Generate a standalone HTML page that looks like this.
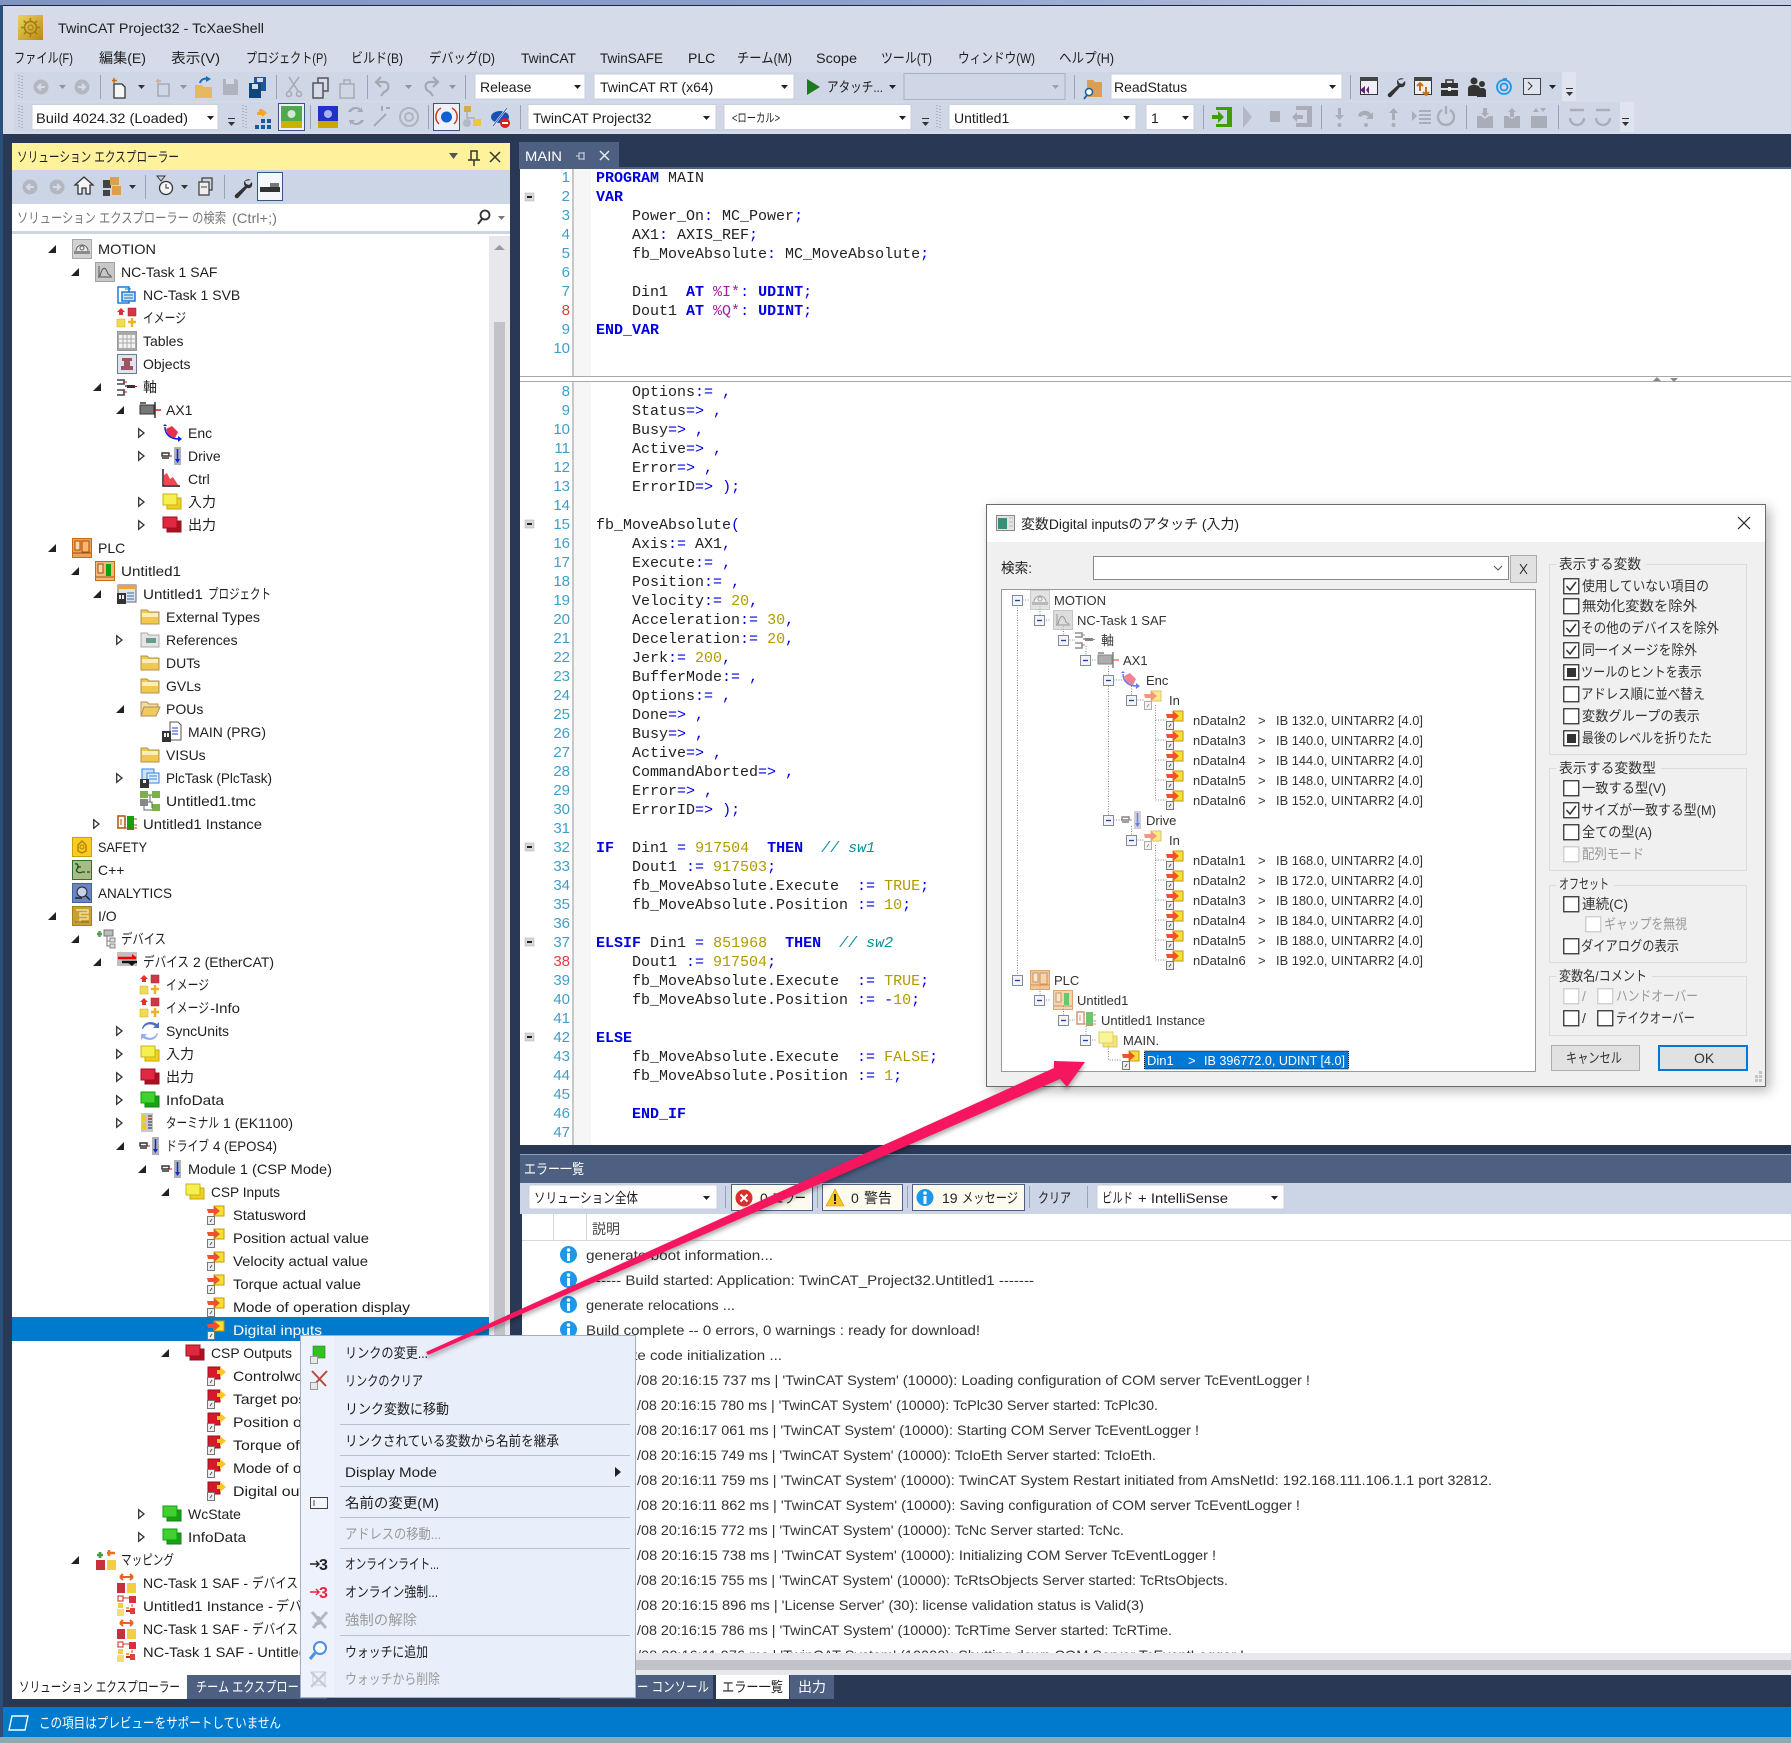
<!DOCTYPE html>
<html lang="ja"><head><meta charset="utf-8"><title>TwinCAT Project32 - TcXaeShell</title>
<style>
html,body{margin:0;padding:0;background:#fff}
svg{display:block;font-family:"Liberation Sans","Noto Sans CJK JP",sans-serif;font-size:14px;fill:#1e1e1e}
.code text{font-family:"Liberation Mono",monospace;font-size:15px;white-space:pre;fill:#222}
.ln text{font-family:"Liberation Sans",sans-serif;font-size:15px;fill:#3f9fc9;text-anchor:end}
.k{fill:#0000e0;font-weight:bold}.o{fill:#0000e0}.n{fill:#b09a00}.c{fill:#0a8f9a;font-style:italic}.p{fill:#a020a0}
.dt text{font-size:13px;fill:#333}
.dim{fill:#9a9a9a}
</style></head><body>
<svg width="1791" height="1743" viewBox="0 0 1791 1743" xmlns="http://www.w3.org/2000/svg">
<defs>
<path id="o" d="M8 0V8H0Z" fill="#222"/>
<path id="cl" d="M.7 .7L6 5L.7 9.3Z" fill="#fff" stroke="#333" stroke-width="1.3"/>
<path id="dd" d="M0 0h7L3.5 4z"/>
<g id="ov"><rect width="7" height="1" fill="#333"/><path d="M0 4h7L3.5 8z" fill="#333"/></g>
<g id="bk"><circle cx="8" cy="8" r="7.5" fill="#b3b7c0"/><path d="M12 8H5M8 5L5 8l3 3" stroke="#d6dbe9" stroke-width="2" fill="none"/></g>
<g id="fw"><circle cx="8" cy="8" r="7.5" fill="#b3b7c0"/><path d="M4 8h7M8 5l3 3-3 3" stroke="#d6dbe9" stroke-width="2" fill="none"/></g>
<g id="grip"><path d="M1 0v24M4 1v24" stroke="#8a93a8" stroke-dasharray="1 2" fill="none"/></g>
<g id="motion"><rect x=".5" y=".5" width="19" height="19" fill="#d2d2d2" stroke="#a8a8a8"/><path d="M4 12a6 6 0 0 1 12 0" fill="#e8e8e8" stroke="#666"/><rect x="2" y="12" width="16" height="3" fill="#8c8c8c"/><circle cx="10" cy="9" r="2" fill="none" stroke="#666"/></g>
<g id="nc"><rect x=".5" y=".5" width="19" height="19" fill="#c8c8c8" stroke="#a0a0a0"/><path d="M4 15V4M3 15h14M5 14c3-12 6-8 8-2l3 2" fill="none" stroke="#555"/></g>
<g id="task"><rect x="1" y="2" width="11" height="16" fill="#fff" stroke="#1070d0" stroke-width="1.4"/><rect x="5" y="7" width="13" height="9" fill="#cfe4f8" stroke="#1070d0" stroke-width="1.4"/><path d="M7 10h9M7 13h9M8 4h6" stroke="#1070d0"/></g>
<g id="img"><path d="M4 0l4 4H6v3H2V4H0z" fill="#e03030"/><rect x="11" y="0" width="8" height="8" fill="#d03848" stroke="#a02030" stroke-width=".5"/><rect x="0" y="11" width="8" height="8" fill="#f0dc50" stroke="#c8b020" stroke-width=".5"/><path d="M15 10v9M11 14h8" stroke="#f0b020" stroke-width="2.4"/></g>
<g id="tbl"><rect x=".5" y=".5" width="19" height="19" fill="#aaa" stroke="#999"/><path d="M2 4h16v13H2z" fill="#f4f4f4"/><path d="M2 8h16M2 12h16M6 4v13M10 4v13M14 4v13" stroke="#aaa"/></g>
<g id="obj"><rect x=".5" y=".5" width="19" height="19" fill="#dfe4ee" stroke="#6a7890"/><path d="M5 4h10v3h-2v5h3v4H4v-4h3V7H5z" fill="#a05560"/></g>
<g id="axes"><path d="M0 3h7v4h-7M0 13h7v5h-7M8 9h7" stroke="#444" stroke-width="1.6" fill="none"/><rect x="10" y="8" width="8" height="3" fill="#333"/><path d="M17 9.500h3M7 5h3M7 15h3" stroke="#d01010"/></g>
<g id="ax"><rect x="0" y="5" width="14" height="9" fill="#777" stroke="#333"/><path d="M0 3h6M15 2v16" stroke="#333" stroke-width="1.500"/><path d="M15 10h6" stroke="#e01010" stroke-width="1.500"/></g>
<g id="enc"><path d="M4 6l6-3 6 6-3 6-7-3z" fill="#e8304a"/><path d="M3 4c0 8 6 12 14 12" fill="none" stroke="#1020e0" stroke-width="1.500"/><path d="M16 13l4 3-4 3zM1 3l2-2 2 2" fill="#1020e0"/></g>
<g id="drv"><path d="M0 7h7v3H0zM0 12h7" stroke="#333" fill="none" stroke-width="1.4"/><path d="M7 10h3" stroke="#e01010"/><rect x="12" y="1" width="7" height="18" fill="#b0b0b8"/><path d="M15.500 3v12" stroke="#1020e0" stroke-width="1.500"/><path d="M13 13h5l-2.500 4z" fill="#1020e0"/></g>
<g id="ctl"><path d="M1 0V17H18" stroke="#111" stroke-width="1.400" fill="none"/><path d="M2 16V6l3-2 3 6 3-2 5 8z" fill="#f04850"/></g>
<g id="yel"><rect x="5" y="6" width="14" height="11" fill="#f0d020" stroke="#c8a800"/><rect x="1" y="2" width="14" height="11" fill="#f4f050" stroke="#d0b010"/></g>
<g id="red"><rect x="5" y="6" width="14" height="11" fill="#b01020" stroke="#901020"/><rect x="1" y="2" width="14" height="11" fill="#e02840" stroke="#a01020"/></g>
<g id="grn"><rect x="5" y="6" width="14" height="11" fill="#18a018" stroke="#108010"/><rect x="1" y="2" width="14" height="11" fill="#40d030" stroke="#10a010"/></g>
<g id="plc"><rect x=".5" y=".5" width="19" height="19" fill="#f0a050" stroke="#c86a10"/><rect x="3" y="3" width="5" height="9" fill="#f8d8a8" stroke="#a05010"/><rect x="10" y="3" width="7" height="11" fill="#f8b870" stroke="#a05010"/><path d="M1 15h18" stroke="#a05010"/></g>
<g id="un"><rect x=".5" y=".5" width="19" height="19" fill="#f5b878" stroke="#c86a10"/><rect x="3" y="3" width="5" height="9" fill="#f8d8a8" stroke="#a05010"/><rect x="11" y="3" width="5" height="12" fill="#10a010"/><path d="M1 16h18" stroke="#a05010"/></g>
<g id="prj"><rect x="1" y="1" width="18" height="17" fill="#dde3ea" stroke="#667"/><rect x="1" y="1" width="18" height="4" fill="#f0a040"/><rect x="0" y="9" width="9" height="11" fill="#333"/><rect x="2" y="11" width="2" height="4" fill="#eee"/><rect x="5" y="11" width="2" height="4" fill="#eee"/><path d="M10 9h7M10 12h7M10 15h7" stroke="#3070b0"/></g>
<g id="fld"><path d="M1 17V3h6l2 2h10v12z" fill="#f0c850" stroke="#b09050"/><path d="M2 6h16v4H2z" fill="#fbeeb8"/></g>
<g id="fop"><path d="M1 17V3h6l2 2h9v3" fill="#f0dca0" stroke="#b09050"/><path d="M1 17l3-9h16l-4 9z" fill="#f2c860" stroke="#b09050"/></g>
<g id="ref"><path d="M1 17V3h6l2 2h10v12z" fill="#e4e4e4" stroke="#a8a8a8"/><rect x="6" y="8" width="10" height="5" fill="#6a9a8a"/></g>
<g id="mn"><path d="M8 0h8l3 3v15H8z" fill="#fff" stroke="#555"/><path d="M10 6h6M10 9h6M10 12h6" stroke="#2040c0"/><rect x="0" y="9" width="9" height="11" fill="#333"/><rect x="2" y="11" width="2" height="4" fill="#eee"/><rect x="5" y="11" width="2" height="4" fill="#eee"/></g>
<g id="ptk"><rect x="2" y="1" width="12" height="14" fill="#cfe4f8" stroke="#3080e0"/><rect x="7" y="5" width="12" height="10" fill="#e0effc" stroke="#3080e0"/><path d="M9 8h8M9 11h8" stroke="#3080e0"/><rect x="0" y="11" width="9" height="9" fill="#333"/><rect x="3" y="12" width="3" height="3" fill="#eee"/></g>
<g id="tmc"><rect x="0" y="0" width="8" height="7" fill="#7ab050"/><rect x="12" y="0" width="8" height="7" fill="#7ab050"/><rect x="12" y="13" width="8" height="7" fill="#7ab050"/><rect x="0" y="8" width="8" height="7" fill="#888"/><path d="M8 4h4M8 11h4v6M10 4v7M4 15v4h8" stroke="#666" fill="none"/></g>
<g id="ins"><rect x="1" y="2" width="7" height="12" fill="#fff" stroke="#b05010" stroke-width="1.500"/><rect x="10" y="2" width="7" height="14" fill="#10a010"/><path d="M0 14h20M4 5v6M8 5h1M17 5h3M17 11h3" stroke="#b05010"/></g>
<g id="sft"><rect x=".5" y=".5" width="19" height="19" fill="#f8cc20" stroke="#c8a010"/><path d="M6 8l4-4 4 4v6l-4 2-4-2z" fill="none" stroke="#b08000" stroke-width="1.400"/><circle cx="10" cy="10" r="2" fill="none" stroke="#b08000"/></g>
<g id="cpp"><rect x=".5" y=".5" width="19" height="19" fill="#a8bc88" stroke="#307030"/><path d="M3 4c3-1 4 3 2 5s2 5 5 3M10 12h3M15 12h3M5 7h4" stroke="#1c5020" fill="none" stroke-width="1.300"/></g>
<g id="ana"><rect x=".5" y=".5" width="19" height="19" fill="#6c84c0" stroke="#4060a0"/><circle cx="10" cy="9" r="5" fill="#c8d0e8" stroke="#223"/><path d="M14 13l4 4M3 15h7" stroke="#223" stroke-width="1.400"/></g>
<g id="io"><rect x=".5" y=".5" width="19" height="19" fill="#c8a030" stroke="#a08020"/><path d="M4 4h12v3H8v3h8v3H8v3H4" fill="none" stroke="#f0e0a0" stroke-width="1.400"/><path d="M3 16h14" stroke="#806010"/></g>
<g id="dev"><path d="M2 5h5M4.500 2v6" stroke="#50a050" stroke-width="2.400"/><rect x="9" y="1" width="9" height="6" fill="#bbb" stroke="#777"/><path d="M12 7v10h3M12 12h3" stroke="#777" fill="none"/><rect x="15" y="9" width="5" height="4" fill="#ddd" stroke="#888"/><rect x="15" y="15" width="5" height="4" fill="#ddd" stroke="#888"/></g>
<g id="ect"><rect y="0" width="20" height="14" fill="#c0c0c0"/><path d="M1 6h18" stroke="#f00000" stroke-width="2.400"/><path d="M15 2l5 4-5 0z" fill="#f00000"/><path d="M5 10h15" stroke="#111" stroke-width="2.400"/><path d="M10 10h9l-4 4z" fill="#111"/></g>
<g id="syn"><path d="M3 8c2-5 8-6 12-3l-2 2h6V1l-2 2C11-1 3 1 2 8z" fill="#5070c8"/><path d="M17 12c-2 5-8 6-12 3l2-2H1v6l2-2c6 4 14 2 15-5z" fill="#98b0e8"/></g>
<g id="trm"><rect x="1" y="0" width="12" height="19" fill="#c8c8c8"/><rect x="2" y="2" width="4" height="6" fill="#f0c820"/><rect x="2" y="10" width="4" height="6" fill="#f0c820"/><path d="M8 3h4M8 6h4M8 9h4M8 12h4M8 15h4" stroke="#607080" stroke-width="1.800"/><path d="M8 6h4" stroke="#d04040" stroke-width="1.800"/></g>
<g id="vi"><rect x="7" y="1" width="10" height="10" fill="#f8e030" stroke="#c89810"/><path d="M0 4h7V1l6 5-6 5V8H1z" fill="#f05030"/><rect x=".5" y="11.500" width="7" height="8" fill="#eee" stroke="#777"/><path d="M3 17l2-3" stroke="#555"/></g>
<g id="vo"><rect x="1" y="1" width="12" height="12" fill="#d81828" stroke="#901020"/><path d="M10 4h3V1l6 5-6 5V8h-3z" fill="#f8c820"/><rect x=".5" y="11.500" width="7" height="8" fill="#eee" stroke="#777"/><path d="M3 17l2-3" stroke="#555"/></g>
<g id="map"><path d="M2 5h6M5 2v6" stroke="#40a040" stroke-width="2.600"/><path d="M12 3h8M14 0v6" stroke="#f07020" stroke-width="2.600"/><rect x="1" y="10" width="9" height="10" fill="#c83040"/><rect x="12" y="10" width="9" height="10" fill="#f0d040"/></g>
<g id="m1"><path d="M3 4h13M3 4l3-3M3 4l3 3M16 4l-3-3M16 4l-3 3" stroke="#f06020" stroke-width="2"/><rect x="0" y="10" width="8" height="10" fill="#c83040"/><rect x="10" y="10" width="9" height="10" fill="#f0d040"/></g>
<g id="m2"><rect x="1" y="0" width="5" height="5" fill="#fff" stroke="#d02020"/><rect x="12" y="0" width="7" height="7" fill="#d83040"/><path d="M6 2h6M3 7v4M15 8v3" stroke="#d04020"/><rect x="1" y="7" width="5" height="5" fill="#f0d040"/><rect x="0" y="13" width="7" height="7" fill="#f0e070"/><path d="M9 15h9" stroke="#d02020" stroke-width="2"/><rect x="13" y="12" width="5" height="6" fill="#e04040"/><path d="M9 12h3" stroke="#f0b020" stroke-width="2"/></g>
<g id="info"><circle cx="8.500" cy="8.500" r="8.500" fill="#1c97ea"/><circle cx="8.500" cy="4" r="1.800" fill="#fff"/><rect x="7" y="7" width="3" height="8" fill="#fff"/></g>
<g id="fold"><rect width="9" height="8" y="0" fill="#d8d8d8" stroke="#aaa" stroke-width=".5"/><rect x="2" y="3" width="5" height="2" fill="#222"/></g>
<g id="minus"><rect x=".5" y=".5" width="10" height="10" fill="#f4f4f4" stroke="#7f8b9a"/><path d="M3 5.500h5" stroke="#2040a0" stroke-width="1.300"/></g>
<g id="cb"><rect x=".75" y=".75" width="15" height="15" fill="#fff" stroke="#333" stroke-width="1.300"/></g>
<g id="cbc"><rect x=".75" y=".75" width="15" height="15" fill="#fff" stroke="#333" stroke-width="1.300"/><path d="M3.500 8l3.500 4 6-8" fill="none" stroke="#333" stroke-width="1.500"/></g>
<g id="cbs"><rect x=".75" y=".75" width="15" height="15" fill="#fff" stroke="#333" stroke-width="1.300"/><rect x="4" y="4" width="9" height="9" fill="#333"/></g>
<g id="cbd"><rect x=".75" y=".75" width="15" height="15" fill="#fff" stroke="#ccc" stroke-width="1.300"/></g>
<filter id="sh" x="-5%" y="-5%" width="110%" height="110%"><feDropShadow dx="4" dy="4" stdDeviation="6" flood-color="#000" flood-opacity=".28"/></filter>
<filter id="sa" x="-5%" y="-10%" width="110%" height="120%"><feDropShadow dx="0" dy="3" stdDeviation="2.500" flood-color="#000" flood-opacity=".35"/></filter>
<linearGradient id="top" x1="0" x2="1"><stop offset="0" stop-color="#7f94c2"/><stop offset=".5" stop-color="#8ea1cd"/><stop offset=".75" stop-color="#b3bfdc"/><stop offset="1" stop-color="#c4cde2"/></linearGradient>
<linearGradient id="ic" x1="0" y1="0" x2="1" y2="1"><stop offset="0" stop-color="#f0d060"/><stop offset="1" stop-color="#b88a10"/></linearGradient>
</defs>

<!-- desktop + window -->
<rect width="1791" height="1743" fill="#2a4f78"/>
<rect width="1791" height="5" fill="url(#top)"/>
<rect y="1737" width="1791" height="6" fill="#8da9b2"/>
<rect x="3" y="5" width="1788" height="1732" fill="#293955"/>
<rect x="3" y="5" width="1788" height="1" fill="#1c2740"/>
<rect x="3" y="6" width="1788" height="128" fill="#d6dbe9"/>

<!-- title -->
<rect x="18" y="15" width="25" height="25" fill="url(#ic)"/><circle cx="30.500" cy="27.500" r="6" fill="none" stroke="#a07c14" stroke-width="1.500"/><circle cx="30.500" cy="27.500" r="2.500" fill="none" stroke="#a07c14"/><path d="M30.500 18v3.500M30.500 33.500V37M21 27.500h3.500M36.500 27.500H40M23.800 20.800l2.500 2.500M34.700 31.700l2.500 2.500M23.800 34.200l2.500-2.500M34.700 23.300l2.500-2.500" stroke="#a07c14" stroke-width="1.500"/>
<text x="58" y="33" textLength="206" lengthAdjust="spacingAndGlyphs">TwinCAT Project32 - TcXaeShell</text>

<!-- menu -->
<g>
<text x="14" y="63" textLength="59" lengthAdjust="spacingAndGlyphs">ファイル(F)</text>
<text x="99" y="63" textLength="47" lengthAdjust="spacingAndGlyphs">編集(E)</text>
<text x="171" y="63" textLength="49" lengthAdjust="spacingAndGlyphs">表示(V)</text>
<text x="246" y="63" textLength="81" lengthAdjust="spacingAndGlyphs">プロジェクト(P)</text>
<text x="351" y="63" textLength="52" lengthAdjust="spacingAndGlyphs">ビルド(B)</text>
<text x="429" y="63" textLength="66" lengthAdjust="spacingAndGlyphs">デバッグ(D)</text>
<text x="521" y="63" textLength="55" lengthAdjust="spacingAndGlyphs">TwinCAT</text>
<text x="600" y="63" textLength="63" lengthAdjust="spacingAndGlyphs">TwinSAFE</text>
<text x="688" y="63">PLC</text>
<text x="737" y="63" textLength="55" lengthAdjust="spacingAndGlyphs">チーム(M)</text>
<text x="816" y="63" textLength="41" lengthAdjust="spacingAndGlyphs">Scope</text>
<text x="881" y="63" textLength="51" lengthAdjust="spacingAndGlyphs">ツール(T)</text>
<text x="958" y="63" textLength="77" lengthAdjust="spacingAndGlyphs">ウィンドウ(W)</text>
<text x="1059" y="63" textLength="55" lengthAdjust="spacingAndGlyphs">ヘルプ(H)</text>
</g>

<!-- toolbar 1 -->
<rect x="14" y="72" width="1548" height="29" fill="#cfd6e5"/><rect x="1562" y="72" width="14" height="29" fill="#dfe4ef"/>
<use href="#grip" x="18" y="75"/>
<use href="#bk" x="33" y="79"/><use href="#dd" x="59" y="85" fill="#8f939c"/><use href="#fw" x="74" y="79"/>
<rect x="100" y="75" width="1" height="24" fill="#9aa3b6"/>
<g transform="translate(111,76)"><path d="M3 8h8l3 3v11H3z" fill="#f6f6f6" stroke="#333" stroke-width="1.300"/><path d="M3 2v5M1 4.500h5" stroke="#c87010" stroke-width="1.600"/></g>
<use href="#dd" x="138" y="85" fill="#333"/>
<g transform="translate(155,78)" opacity=".4"><path d="M3 6h11v12H3z" fill="none" stroke="#555" stroke-width="1.300"/><path d="M3 1v5M1 3h5" stroke="#c87010" stroke-width="1.500"/></g>
<use href="#dd" x="180" y="85" fill="#8f939c"/>
<g transform="translate(194,76)"><path d="M1 9h7l2 2h8v11H1z" fill="#e8b860"/><path d="M6 7c1-4 5-5 8-4" fill="none" stroke="#1070c0" stroke-width="2"/><path d="M12 0l5 3-5 3z" fill="#1070c0"/></g>
<g transform="translate(222,78)"><path d="M1 1h13l2 2v14H1z" fill="#aeb3bd"/><rect x="4" y="1" width="8" height="5" fill="#d6dbe9"/></g>
<g transform="translate(248,76)"><path d="M6 1h12v14H6z" fill="#1a5a9c"/><path d="M1 7h12v15H1z" fill="#10457c"/><rect x="4" y="8" width="6" height="5" fill="#d6dbe9"/><rect x="9" y="2" width="6" height="4" fill="#d6dbe9"/></g>
<rect x="276" y="75" width="1" height="24" fill="#9aa3b6"/>
<g transform="translate(286,77)" fill="none" stroke="#a7abb3" stroke-width="1.600"><path d="M3 0l9 14M13 0L3 14"/><circle cx="3" cy="17" r="2.500"/><circle cx="13" cy="17" r="2.500"/></g>
<g transform="translate(312,77)" fill="#d6dbe9" stroke="#555" stroke-width="1.500"><rect x="6" y="1" width="10" height="13"/><rect x="1" y="6" width="10" height="15"/></g>
<g transform="translate(339,77)" fill="none" stroke="#a7abb3" stroke-width="1.500"><rect x="1" y="7" width="14" height="14"/><path d="M5 7V3h6v4"/></g>
<rect x="367" y="75" width="1" height="24" fill="#9aa3b6"/>
<path d="M381 77l-5 5 5 5M376 82h8c6 0 6 8 0 10l-3 4" fill="none" stroke="#a4a8b2" stroke-width="2.200"/>
<use href="#dd" x="405" y="85" fill="#8f939c"/>
<path d="M433 77l5 5-5 5M438 82h-8c-6 0-6 8 0 10l3 4" fill="none" stroke="#a4a8b2" stroke-width="2.200"/>
<use href="#dd" x="449" y="85" fill="#8f939c"/>
<rect x="465" y="75" width="1" height="24" fill="#9aa3b6"/>
<rect x="475" y="74" width="110" height="25" fill="#fff" stroke="#c8cfdd"/><text x="480" y="92">Release</text><use href="#dd" x="574" y="85" fill="#222"/>
<rect x="594" y="74" width="200" height="25" fill="#fff" stroke="#c8cfdd"/><text x="600" y="92">TwinCAT RT (x64)</text><use href="#dd" x="781" y="85" fill="#222"/>
<path d="M807 79l13 8-13 8z" fill="#1e7a1e"/><text x="827" y="92" textLength="56" lengthAdjust="spacingAndGlyphs">アタッチ...</text><use href="#dd" x="889" y="85" fill="#222"/>
<rect x="904" y="73.500" width="161" height="26" fill="#cfd6e5" stroke="#aab2c4"/><use href="#dd" x="1052" y="85" fill="#9aa1ae"/>
<rect x="1074" y="75" width="1" height="24" fill="#9aa3b6"/>
<g transform="translate(1084,78)"><path d="M3 2h6l2 2h7v15H3z" fill="#d8a050"/><circle cx="5" cy="14" r="3.500" fill="#fff" stroke="#1a60a0" stroke-width="1.500"/><path d="M3 17l-3 4" stroke="#1a60a0" stroke-width="1.800"/></g>
<rect x="1111" y="74" width="231" height="25" fill="#fff" stroke="#c8cfdd"/><text x="1114" y="92">ReadStatus</text><use href="#dd" x="1329" y="85" fill="#222"/>
<rect x="1350" y="75" width="1" height="24" fill="#9aa3b6"/>
<g transform="translate(1360,77)"><rect x=".5" y=".5" width="17" height="17" fill="#eef0f6" stroke="#333"/><rect width="18" height="4" fill="#444"/><path d="M0 13l5 4V9zM6 13l3 4V9L6 13" fill="#68217a"/></g>
<g id="wr" transform="translate(1387,77)"><path d="M17 2c-3-2-7 0-7 3 0 1 0 2 1 3L1 17c-1 2 1 4 3 3L13 10c4 1 6-2 5-6l-3 3-3-1-1-3z" fill="#333"/></g>
<g transform="translate(1414,77)"><rect x=".5" y=".5" width="17" height="17" fill="#eef0f6" stroke="#333"/><rect width="18" height="4" fill="#444"/><path d="M3 9l3-3 3 3M6 6v8M9 15l3 3 3-3M12 18v-8" stroke="#c87010" stroke-width="2" fill="none"/></g>
<g transform="translate(1441,78)"><rect y="5" width="17" height="13" fill="#333"/><path d="M5 5V2h7v3" fill="none" stroke="#333" stroke-width="1.500"/><rect y="10" width="17" height="2" fill="#d6dbe9"/><rect x="7" y="9" width="3" height="4" fill="#eee"/></g>
<g transform="translate(1468,77)" fill="#333"><circle cx="6" cy="4" r="3.500"/><path d="M0 19v-7c0-3 2-4 6-4s6 1 6 4v7z"/><circle cx="14" cy="7" r="3"/><path d="M9 20v-5c0-3 2-4 5-4s4 1 4 4v5z"/></g>
<g transform="translate(1496,77)" fill="none" stroke="#1c97ea" stroke-width="1.800"><circle cx="8" cy="10" r="7"/><circle cx="8" cy="10" r="3.500"/><path d="M7 2h4"/></g>
<g transform="translate(1523,78)"><rect x=".5" y=".5" width="17" height="16" fill="#dfe4ef" stroke="#444"/><path d="M5 4l4 4-4 4" stroke="#333" fill="none"/></g>
<use href="#dd" x="1549" y="85" fill="#222"/><use href="#ov" x="1566" y="88"/>

<!-- toolbar 2 -->
<rect x="14" y="102" width="1606" height="30" fill="#cfd6e5"/><rect x="1620" y="102" width="14" height="30" fill="#dfe4ef"/>
<use href="#grip" x="18" y="105"/>
<rect x="32" y="104.500" width="186" height="25" fill="#fff" stroke="#c8cfdd"/><text x="36" y="123" textLength="152" lengthAdjust="spacingAndGlyphs">Build 4024.32 (Loaded)</text><use href="#dd" x="207" y="116" fill="#222"/>
<use href="#ov" x="228" y="118"/><use href="#grip" x="242" y="105"/>
<g transform="translate(254,108)"><path d="M5 1h3l5 4-5 4V7H3V4h2z" fill="#f0a820"/><rect x="7" y="11" width="4" height="4" fill="#1a5a9c"/><rect x="13" y="11" width="4" height="4" fill="#1a5a9c"/><rect x="1" y="17" width="4" height="4" fill="#1a5a9c"/><rect x="7" y="17" width="4" height="4" fill="#1a5a9c"/><rect x="13" y="17" width="4" height="4" fill="#1a5a9c"/></g>
<rect x="278.500" y="103.500" width="26" height="27" fill="#eef1f8" stroke="#3a5680"/>
<rect x="281" y="106" width="21" height="15" fill="#4faa4f"/><rect x="281" y="121" width="21" height="7" fill="#c8b400"/><circle cx="291.500" cy="114" r="4" fill="#cfe8cf"/>
<rect x="310" y="105" width="1" height="24" fill="#9aa3b6"/>
<rect x="318" y="106" width="20" height="15" fill="#2030c8"/><rect x="318" y="121" width="20" height="7" fill="#c8a800"/><circle cx="328" cy="114" r="4" fill="#a8b4f0"/>
<path d="M348 112c3-6 9-6 13-3v-3l2 6h-6l2-2c-3-2-6-1-8 2zM364 120c-3 6-9 6-13 3v3l-2-6h6l-2 2c3 2 6 1 8-2z" fill="#a3a8b3"/>
<path d="M374 126l12-12M382 106v5M386 108h4" stroke="#a3a8b3" stroke-width="2" fill="none"/>
<circle cx="409" cy="117" r="9" fill="none" stroke="#b0b4be" stroke-width="2"/><circle cx="409" cy="117" r="4" fill="none" stroke="#b0b4be" stroke-width="2"/>
<rect x="428" y="105" width="1" height="24" fill="#9aa3b6"/>
<rect x="433.500" y="103.500" width="26" height="27" fill="#eef1f8" stroke="#3a5680"/>
<circle cx="446.500" cy="117" r="5.500" fill="#1060d0"/><path d="M441 108a10 10 0 0 0-2 16M452 108a10 10 0 0 1 2 16" stroke="#c04020" fill="none" stroke-width="1.500"/>
<g transform="translate(463,105)"><rect x="1" y="1" width="7" height="6" fill="#d8a850"/><path d="M4 7v6M4 13h8" stroke="#999"/><circle cx="4" cy="18" r="4" fill="#b0b8c8"/><rect x="10" y="14" width="8" height="7" fill="#e8c840"/></g>
<g transform="translate(490,106)"><ellipse cx="10" cy="11" rx="9" ry="6" fill="#1a50b0"/><path d="M3 20L17 2" stroke="#fff" stroke-width="2"/><path d="M3 20L17 2" stroke="#1a50b0"/><circle cx="15" cy="17" r="5" fill="#d82020"/><rect x="12" y="16" width="6" height="2" fill="#fff"/></g>
<rect x="520" y="105" width="1" height="24" fill="#9aa3b6"/>
<rect x="528" y="104.500" width="188" height="25" fill="#fff" stroke="#c8cfdd"/><text x="533" y="123">TwinCAT Project32</text><use href="#dd" x="703" y="116" fill="#222"/>
<rect x="724" y="104.500" width="187" height="25" fill="#fff" stroke="#c8cfdd"/><text x="732" y="122" font-size="12" textLength="48" lengthAdjust="spacingAndGlyphs">&lt;ローカル&gt;</text><use href="#dd" x="899" y="116" fill="#222"/>
<use href="#ov" x="922" y="118"/><use href="#grip" x="936" y="105"/>
<rect x="949" y="104.500" width="187" height="25" fill="#fff" stroke="#c8cfdd"/><text x="954" y="123">Untitled1</text><use href="#dd" x="1123" y="116" fill="#222"/>
<rect x="1146" y="104.500" width="48" height="25" fill="#fff" stroke="#c8cfdd"/><text x="1151" y="123">1</text><use href="#dd" x="1182" y="116" fill="#222"/>
<rect x="1203" y="105" width="1" height="24" fill="#9aa3b6"/>
<g transform="translate(1212,107)"><path d="M4 0h16v20H4v-3h11V3H4z" fill="#3ea000"/><path d="M0 8h6V4l6 6-6 6v-4H0z" fill="#3ea000"/></g>
<path d="M1243 106l9 11-9 11z" fill="#b3b8c4"/>
<rect x="1270" y="111" width="10" height="11" fill="#a8adb8"/>
<path d="M1296 106h16v21h-16v-4h11v-13h-11zM1292 117l5-5v3h6v4h-6v3z" fill="#a8adb8"/>
<rect x="1321" y="105" width="1" height="24" fill="#9aa3b6"/>
<g fill="#a8adb8"><path d="M1338 108h3v7h3l-4.500 5-4.500-5h3z"/><circle cx="1339.500" cy="125" r="2"/>
<path d="M1358 116c1-6 10-7 13-2l2-2v7h-7l2-2c-2-3-6-2-7 0z"/><circle cx="1366" cy="125" r="2"/>
<path d="M1392 120h3v-7h3l-4.500-5-4.500 5h3z"/><circle cx="1393.500" cy="125" r="2"/>
<path d="M1412 111l5 5-5 5zM1419 110h12v2h-12zM1419 114h12v2h-12zM1419 118h12v2h-12zM1419 122h12v2h-12z"/></g>
<path d="M1442 110a8 8 0 1 0 8 0M1446 106v8" fill="none" stroke="#a8adb8" stroke-width="2.400"/>
<rect x="1466" y="105" width="1" height="24" fill="#9aa3b6"/>
<g fill="#a8adb8"><path d="M1477 116h4l4 3 4-3h4v12h-16zM1483 108h4v5h2l-4 4-4-4h2z"/><path d="M1504 116h4l4 3 4-3h4v12h-16zM1510 117h4v-5h2l-4-4-4 4h2z"/><path d="M1531 116h16v12h-16zM1533 112l3-4 3 4zM1540 108l3 4 3-4z"/></g>
<rect x="1558" y="105" width="1" height="24" fill="#9aa3b6"/>
<path d="M1570 110h14M1570 118a7 7 0 1 0 14 0M1596 110h14M1596 118a7 7 0 1 0 14 0" fill="none" stroke="#a8adb8" stroke-width="2.400"/>
<use href="#ov" x="1622" y="118"/>

<!-- LEFT PANEL -->
<rect x="12" y="143" width="498" height="27" fill="#fff29d"/>
<text x="17" y="162" textLength="162" lengthAdjust="spacingAndGlyphs">ソリューション エクスプローラー</text>
<path d="M449 153h9l-4.500 6z" fill="#555"/>
<path d="M471 151h6v9h-6zM468 160h12M474 160v6" fill="none" stroke="#333" stroke-width="1.500"/>
<path d="M490 152l10 10M500 152l-10 10" stroke="#333" stroke-width="1.500"/>
<rect x="12" y="170" width="498" height="34" fill="#ccd5e6"/>
<use href="#bk" x="22" y="179"/><use href="#fw" x="49" y="179"/>
<path d="M84 177l-9 8h3v9h4v-6h4v6h4v-9h3z" fill="#f4f4f4" stroke="#333" stroke-width="1.300"/>
<g transform="translate(103,177)"><rect x="0" y="3" width="8" height="8" fill="#444"/><rect x="7" y="0" width="9" height="8" fill="#d8a050"/><rect x="9" y="9" width="9" height="9" fill="#d8a050"/><rect x="0" y="13" width="7" height="6" fill="#444"/></g>
<use href="#dd" x="129" y="185" fill="#333"/>
<rect x="145" y="175" width="1" height="24" fill="#9aa3b6"/>
<circle cx="166" cy="188" r="6.500" fill="#f4f4f4" stroke="#333" stroke-width="1.300"/><path d="M166 184v4h3M157 176h8l-4 5z" fill="none" stroke="#333"/>
<use href="#dd" x="181" y="185" fill="#333"/>
<g transform="translate(198,178)"><rect x="4" y="0" width="10" height="12" fill="none" stroke="#444" stroke-width="1.300"/><rect x="1" y="4" width="10" height="13" fill="#eee" stroke="#444" stroke-width="1.300"/><path d="M3 9h6" stroke="#444"/></g>
<rect x="224" y="175" width="1" height="24" fill="#9aa3b6"/>
<use href="#wr" x="-1153" y="101"/>
<rect x="257.500" y="172.500" width="25" height="28" fill="#f4f7fb" stroke="#3a5680"/><rect x="260" y="187" width="20" height="5" fill="#333"/><rect x="270" y="183" width="9" height="4" fill="#777"/>
<rect x="12" y="204" width="498" height="27" fill="#fff"/>
<text x="17" y="223" textLength="209" lengthAdjust="spacingAndGlyphs" fill="#777">ソリューション エクスプローラー の検索</text><text x="232" y="223" fill="#777" textLength="45" lengthAdjust="spacingAndGlyphs">(Ctrl+;)</text>
<circle cx="485" cy="215" r="4.500" fill="none" stroke="#333" stroke-width="1.800"/><path d="M482 219l-4 5" stroke="#333" stroke-width="2"/>
<use href="#dd" x="498" y="216" fill="#777"/>
<rect x="12" y="231" width="498" height="3" fill="#ccd5e6"/>
<rect x="12" y="234" width="498" height="1441" fill="#fff"/>
<!-- tree scrollbar -->
<rect x="489" y="236" width="21" height="1439" fill="#e8e8ec"/>
<rect x="494" y="322" width="11" height="1020" fill="#c2c3c9"/>
<path d="M494 250l5.500-5 5.500 5z" fill="#999ba2"/>
<!-- selection -->
<rect x="12" y="1317" width="477" height="24" fill="#007acc"/>

<g id="tree" transform="translate(0,1)">
<g transform="translate(98,248)"><use href="#o" x="-50" y="-4"/><use href="#motion" x="-26" y="-10"/><text y="5" textLength="58" lengthAdjust="spacingAndGlyphs">MOTION</text></g>
<g transform="translate(121,271)"><use href="#o" x="-50" y="-4"/><use href="#nc" x="-26" y="-10"/><text y="5">NC-Task 1 SAF</text></g>
<g transform="translate(143,294)"><use href="#task" x="-26" y="-10"/><text y="5">NC-Task 1 SVB</text></g>
<g transform="translate(143,317)"><use href="#img" x="-26" y="-10"/><text y="5" textLength="43" lengthAdjust="spacingAndGlyphs">イメージ</text></g>
<g transform="translate(143,340)"><use href="#tbl" x="-26" y="-10"/><text y="5">Tables</text></g>
<g transform="translate(143,363)"><use href="#obj" x="-26" y="-10"/><text y="5">Objects</text></g>
<g transform="translate(143,386)"><use href="#o" x="-50" y="-4"/><use href="#axes" x="-26" y="-10"/><text y="5">軸</text></g>
<g transform="translate(166,409)"><use href="#o" x="-50" y="-4"/><use href="#ax" x="-26" y="-10"/><text y="5">AX1</text></g>
<g transform="translate(188,432)"><use href="#cl" x="-50" y="-5"/><use href="#enc" x="-26" y="-10"/><text y="5">Enc</text></g>
<g transform="translate(188,455)"><use href="#cl" x="-50" y="-5"/><use href="#drv" x="-26" y="-10"/><text y="5">Drive</text></g>
<g transform="translate(188,478)"><use href="#ctl" x="-26" y="-10"/><text y="5">Ctrl</text></g>
<g transform="translate(188,501)"><use href="#cl" x="-50" y="-5"/><use href="#yel" x="-26" y="-10"/><text y="5">入力</text></g>
<g transform="translate(188,524)"><use href="#cl" x="-50" y="-5"/><use href="#red" x="-26" y="-10"/><text y="5">出力</text></g>
<g transform="translate(98,547)"><use href="#o" x="-50" y="-4"/><use href="#plc" x="-26" y="-10"/><text y="5">PLC</text></g>
<g transform="translate(121,570)"><use href="#o" x="-50" y="-4"/><use href="#un" x="-26" y="-10"/><text y="5" textLength="60" lengthAdjust="spacingAndGlyphs">Untitled1</text></g>
<g transform="translate(143,593)"><use href="#o" x="-50" y="-4"/><use href="#prj" x="-26" y="-10"/><text y="5" textLength="60" lengthAdjust="spacingAndGlyphs">Untitled1</text><text x="65" y="5" textLength="63" lengthAdjust="spacingAndGlyphs">プロジェクト</text></g>
<g transform="translate(166,616)"><use href="#fld" x="-26" y="-10"/><text y="5" textLength="94" lengthAdjust="spacingAndGlyphs">External Types</text></g>
<g transform="translate(166,639)"><use href="#cl" x="-50" y="-5"/><use href="#ref" x="-26" y="-10"/><text y="5">References</text></g>
<g transform="translate(166,662)"><use href="#fld" x="-26" y="-10"/><text y="5">DUTs</text></g>
<g transform="translate(166,685)"><use href="#fld" x="-26" y="-10"/><text y="5">GVLs</text></g>
<g transform="translate(166,708)"><use href="#o" x="-50" y="-4"/><use href="#fop" x="-26" y="-10"/><text y="5">POUs</text></g>
<g transform="translate(188,731)"><use href="#mn" x="-26" y="-10"/><text y="5" textLength="78" lengthAdjust="spacingAndGlyphs">MAIN (PRG)</text></g>
<g transform="translate(166,754)"><use href="#fld" x="-26" y="-10"/><text y="5">VISUs</text></g>
<g transform="translate(166,777)"><use href="#cl" x="-50" y="-5"/><use href="#ptk" x="-26" y="-10"/><text y="5" textLength="106" lengthAdjust="spacingAndGlyphs">PlcTask (PlcTask)</text></g>
<g transform="translate(166,800)"><use href="#tmc" x="-26" y="-10"/><text y="5" textLength="90" lengthAdjust="spacingAndGlyphs">Untitled1.tmc</text></g>
<g transform="translate(143,823)"><use href="#cl" x="-50" y="-5"/><use href="#ins" x="-26" y="-10"/><text y="5" textLength="119" lengthAdjust="spacingAndGlyphs">Untitled1 Instance</text></g>
<g transform="translate(98,846)"><use href="#sft" x="-26" y="-10"/><text y="5" textLength="49" lengthAdjust="spacingAndGlyphs">SAFETY</text></g>
<g transform="translate(98,869)"><use href="#cpp" x="-26" y="-10"/><text y="5">C++</text></g>
<g transform="translate(98,892)"><use href="#ana" x="-26" y="-10"/><text y="5" textLength="74" lengthAdjust="spacingAndGlyphs">ANALYTICS</text></g>
<g transform="translate(98,915)"><use href="#o" x="-50" y="-4"/><use href="#io" x="-26" y="-10"/><text y="5">I/O</text></g>
<g transform="translate(121,938)"><use href="#o" x="-50" y="-4"/><use href="#dev" x="-26" y="-10"/><text y="5" textLength="45" lengthAdjust="spacingAndGlyphs">デバイス</text></g>
<g transform="translate(143,961)"><use href="#o" x="-50" y="-4"/><use href="#ect" x="-26" y="-10"/><text y="5" textLength="46" lengthAdjust="spacingAndGlyphs">デバイス</text><text x="50" y="5" textLength="81" lengthAdjust="spacingAndGlyphs">2 (EtherCAT)</text></g>
<g transform="translate(166,984)"><use href="#img" x="-26" y="-10"/><text y="5" textLength="43" lengthAdjust="spacingAndGlyphs">イメージ</text></g>
<g transform="translate(166,1007)"><use href="#img" x="-26" y="-10"/><text y="5" textLength="43" lengthAdjust="spacingAndGlyphs">イメージ</text><text x="44" y="5" textLength="30" lengthAdjust="spacingAndGlyphs">-Info</text></g>
<g transform="translate(166,1030)"><use href="#cl" x="-50" y="-5"/><use href="#syn" x="-26" y="-10"/><text y="5" textLength="63" lengthAdjust="spacingAndGlyphs">SyncUnits</text></g>
<g transform="translate(166,1053)"><use href="#cl" x="-50" y="-5"/><use href="#yel" x="-26" y="-10"/><text y="5">入力</text></g>
<g transform="translate(166,1076)"><use href="#cl" x="-50" y="-5"/><use href="#red" x="-26" y="-10"/><text y="5">出力</text></g>
<g transform="translate(166,1099)"><use href="#cl" x="-50" y="-5"/><use href="#grn" x="-26" y="-10"/><text y="5" textLength="58" lengthAdjust="spacingAndGlyphs">InfoData</text></g>
<g transform="translate(166,1122)"><use href="#cl" x="-50" y="-5"/><use href="#trm" x="-26" y="-10"/><text y="5" textLength="53" lengthAdjust="spacingAndGlyphs">ターミナル</text><text x="57" y="5" textLength="70" lengthAdjust="spacingAndGlyphs">1 (EK1100)</text></g>
<g transform="translate(166,1145)"><use href="#o" x="-50" y="-4"/><use href="#drv" x="-26" y="-10"/><text y="5" textLength="43" lengthAdjust="spacingAndGlyphs">ドライブ</text><text x="47" y="5" textLength="64" lengthAdjust="spacingAndGlyphs">4 (EPOS4)</text></g>
<g transform="translate(188,1168)"><use href="#o" x="-50" y="-4"/><use href="#drv" x="-26" y="-10"/><text y="5" textLength="144" lengthAdjust="spacingAndGlyphs">Module 1 (CSP Mode)</text></g>
<g transform="translate(211,1191)"><use href="#o" x="-50" y="-4"/><use href="#yel" x="-26" y="-10"/><text y="5" textLength="69" lengthAdjust="spacingAndGlyphs">CSP Inputs</text></g>
<g transform="translate(233,1214)"><use href="#vi" x="-26" y="-10"/><text y="5" textLength="73" lengthAdjust="spacingAndGlyphs">Statusword</text></g>
<g transform="translate(233,1237)"><use href="#vi" x="-26" y="-10"/><text y="5" textLength="136" lengthAdjust="spacingAndGlyphs">Position actual value</text></g>
<g transform="translate(233,1260)"><use href="#vi" x="-26" y="-10"/><text y="5" textLength="135" lengthAdjust="spacingAndGlyphs">Velocity actual value</text></g>
<g transform="translate(233,1283)"><use href="#vi" x="-26" y="-10"/><text y="5" textLength="128" lengthAdjust="spacingAndGlyphs">Torque actual value</text></g>
<g transform="translate(233,1306)"><use href="#vi" x="-26" y="-10"/><text y="5" textLength="177" lengthAdjust="spacingAndGlyphs">Mode of operation display</text></g>
<g transform="translate(233,1329)"><use href="#vi" x="-26" y="-10"/><text y="5" fill="#fff" textLength="89" lengthAdjust="spacingAndGlyphs">Digital inputs</text></g>
<g transform="translate(211,1352)"><use href="#o" x="-50" y="-4"/><use href="#red" x="-26" y="-10"/><text y="5" textLength="81" lengthAdjust="spacingAndGlyphs">CSP Outputs</text></g>
<g transform="translate(233,1375)"><use href="#vo" x="-26" y="-10"/><text y="5" textLength="84" lengthAdjust="spacingAndGlyphs">Controlword</text></g>
<g transform="translate(233,1398)"><use href="#vo" x="-26" y="-10"/><text y="5" textLength="102" lengthAdjust="spacingAndGlyphs">Target position</text></g>
<g transform="translate(233,1421)"><use href="#vo" x="-26" y="-10"/><text y="5" textLength="98" lengthAdjust="spacingAndGlyphs">Position offset</text></g>
<g transform="translate(233,1444)"><use href="#vo" x="-26" y="-10"/><text y="5" textLength="92" lengthAdjust="spacingAndGlyphs">Torque offset</text></g>
<g transform="translate(233,1467)"><use href="#vo" x="-26" y="-10"/><text y="5" textLength="124" lengthAdjust="spacingAndGlyphs">Mode of operation</text></g>
<g transform="translate(233,1490)"><use href="#vo" x="-26" y="-10"/><text y="5" textLength="101" lengthAdjust="spacingAndGlyphs">Digital outputs</text></g>
<g transform="translate(188,1513)"><use href="#cl" x="-50" y="-5"/><use href="#grn" x="-26" y="-10"/><text y="5">WcState</text></g>
<g transform="translate(188,1536)"><use href="#cl" x="-50" y="-5"/><use href="#grn" x="-26" y="-10"/><text y="5" textLength="58" lengthAdjust="spacingAndGlyphs">InfoData</text></g>
<g transform="translate(121,1559)"><use href="#o" x="-50" y="-4"/><use href="#map" x="-26" y="-10"/><text y="5" textLength="53" lengthAdjust="spacingAndGlyphs">マッピング</text></g>
<g transform="translate(143,1582)"><use href="#m1" x="-26" y="-10"/><text y="5" textLength="105" lengthAdjust="spacingAndGlyphs">NC-Task 1 SAF -</text><text x="109" y="5" textLength="46" lengthAdjust="spacingAndGlyphs">デバイス</text></g>
<g transform="translate(143,1605)"><use href="#m2" x="-26" y="-10"/><text y="5" textLength="130" lengthAdjust="spacingAndGlyphs">Untitled1 Instance -</text><text x="133" y="5" textLength="26" lengthAdjust="spacingAndGlyphs">デバ</text></g>
<g transform="translate(143,1628)"><use href="#m1" x="-26" y="-10"/><text y="5" textLength="105" lengthAdjust="spacingAndGlyphs">NC-Task 1 SAF -</text><text x="109" y="5" textLength="46" lengthAdjust="spacingAndGlyphs">デバイス</text></g>
<g transform="translate(143,1651)"><use href="#m2" x="-26" y="-10"/><text y="5" textLength="164" lengthAdjust="spacingAndGlyphs">NC-Task 1 SAF - Untitled</text></g>
</g>
<!-- left tabs -->
<rect x="12" y="1675" width="175" height="24" fill="#fff"/>
<text x="19" y="1692" textLength="161" lengthAdjust="spacingAndGlyphs">ソリューション エクスプローラー</text>
<rect x="187" y="1675" width="140" height="24" fill="#4d6082"/>
<text x="196" y="1692" fill="#fff" textLength="125" lengthAdjust="spacingAndGlyphs">チーム エクスプローラー</text>

<!-- EDITOR -->
<rect x="519" y="142" width="100" height="27" fill="#4d6082"/>
<rect x="519" y="167" width="1272" height="2" fill="#4d6082"/>
<text x="525" y="161" fill="#fff" textLength="37" lengthAdjust="spacingAndGlyphs">MAIN</text>
<path d="M579 153h5v6h-5zM576 156h3M584 152v8" stroke="#d5dbe8" fill="none"/>
<path d="M600 151l9 9M609 151l-9 9" stroke="#e8ecf4" stroke-width="1.500"/>
<rect x="520" y="169" width="1271" height="976" fill="#fff"/>
<rect x="572" y="169" width="2" height="207" fill="#c8c8c8"/><rect x="574" y="169" width="17" height="207" fill="#f6f6f6"/>
<rect x="572" y="382" width="2" height="763" fill="#c8c8c8"/><rect x="574" y="382" width="17" height="763" fill="#f6f6f6"/>
<rect x="520" y="376" width="1271" height="6" fill="#fff"/><path d="M520 376.500H1791M520 381.500H1791" stroke="#a8a8a8"/>
<path d="M1653 381l4-4 4 4zM1670 378h8l-4 4z" fill="#888"/>
<use href="#fold" x="525" y="193"/><use href="#fold" x="525" y="520"/><use href="#fold" x="525" y="843"/><use href="#fold" x="525" y="938"/><use href="#fold" x="525" y="1033"/>

<g class="ln">
<text x="570" y="182">1</text><text x="570" y="201">2</text><text x="570" y="220">3</text><text x="570" y="239">4</text><text x="570" y="258">5</text><text x="570" y="277">6</text><text x="570" y="296">7</text><text x="570" y="315" style="fill:#d84040">8</text><text x="570" y="334">9</text><text x="570" y="353">10</text>
<text x="570" y="396">8</text><text x="570" y="415">9</text><text x="570" y="434">10</text><text x="570" y="453">11</text><text x="570" y="472">12</text><text x="570" y="491">13</text><text x="570" y="510">14</text><text x="570" y="529">15</text><text x="570" y="548">16</text><text x="570" y="567">17</text><text x="570" y="586">18</text><text x="570" y="605">19</text><text x="570" y="624">20</text><text x="570" y="643">21</text><text x="570" y="662">22</text><text x="570" y="681">23</text><text x="570" y="700">24</text><text x="570" y="719">25</text><text x="570" y="738">26</text><text x="570" y="757">27</text><text x="570" y="776">28</text><text x="570" y="795">29</text><text x="570" y="814">30</text><text x="570" y="833">31</text><text x="570" y="852">32</text><text x="570" y="871">33</text><text x="570" y="890">34</text><text x="570" y="909">35</text><text x="570" y="928">36</text><text x="570" y="947">37</text><text x="570" y="966" style="fill:#d84040">38</text><text x="570" y="985">39</text><text x="570" y="1004">40</text><text x="570" y="1023">41</text><text x="570" y="1042">42</text><text x="570" y="1061">43</text><text x="570" y="1080">44</text><text x="570" y="1099">45</text><text x="570" y="1118">46</text><text x="570" y="1137">47</text>
</g>
<g class="code" transform="translate(-1,1)">
<text x="597" y="181"><tspan class="k">PROGRAM</tspan> MAIN</text>
<text x="597" y="200"><tspan class="k">VAR</tspan></text>
<text x="597" y="219">    Power_On<tspan class="o">:</tspan> MC_Power<tspan class="o">;</tspan></text>
<text x="597" y="238">    AX1<tspan class="o">:</tspan> AXIS_REF<tspan class="o">;</tspan></text>
<text x="597" y="257">    fb_MoveAbsolute<tspan class="o">:</tspan> MC_MoveAbsolute<tspan class="o">;</tspan></text>
<text x="597" y="295">    Din1  <tspan class="k">AT</tspan> <tspan class="p">%I*</tspan><tspan class="o">:</tspan> <tspan class="k">UDINT</tspan><tspan class="o">;</tspan></text>
<text x="597" y="314">    Dout1 <tspan class="k">AT</tspan> <tspan class="p">%Q*</tspan><tspan class="o">:</tspan> <tspan class="k">UDINT</tspan><tspan class="o">;</tspan></text>
<text x="597" y="333"><tspan class="k">END_VAR</tspan></text>

<text x="597" y="395">    Options<tspan class="o">:=</tspan> <tspan class="o">,</tspan></text>
<text x="597" y="414">    Status<tspan class="o">=&gt;</tspan> <tspan class="o">,</tspan></text>
<text x="597" y="433">    Busy<tspan class="o">=&gt;</tspan> <tspan class="o">,</tspan></text>
<text x="597" y="452">    Active<tspan class="o">=&gt;</tspan> <tspan class="o">,</tspan></text>
<text x="597" y="471">    Error<tspan class="o">=&gt;</tspan> <tspan class="o">,</tspan></text>
<text x="597" y="490">    ErrorID<tspan class="o">=&gt;</tspan> <tspan class="o">);</tspan></text>
<text x="597" y="528">fb_MoveAbsolute<tspan class="o">(</tspan></text>
<text x="597" y="547">    Axis<tspan class="o">:=</tspan> AX1<tspan class="o">,</tspan></text>
<text x="597" y="566">    Execute<tspan class="o">:=</tspan> <tspan class="o">,</tspan></text>
<text x="597" y="585">    Position<tspan class="o">:=</tspan> <tspan class="o">,</tspan></text>
<text x="597" y="604">    Velocity<tspan class="o">:=</tspan> <tspan class="n">20</tspan><tspan class="o">,</tspan></text>
<text x="597" y="623">    Acceleration<tspan class="o">:=</tspan> <tspan class="n">30</tspan><tspan class="o">,</tspan></text>
<text x="597" y="642">    Deceleration<tspan class="o">:=</tspan> <tspan class="n">20</tspan><tspan class="o">,</tspan></text>
<text x="597" y="661">    Jerk<tspan class="o">:=</tspan> <tspan class="n">200</tspan><tspan class="o">,</tspan></text>
<text x="597" y="680">    BufferMode<tspan class="o">:=</tspan> <tspan class="o">,</tspan></text>
<text x="597" y="699">    Options<tspan class="o">:=</tspan> <tspan class="o">,</tspan></text>
<text x="597" y="718">    Done<tspan class="o">=&gt;</tspan> <tspan class="o">,</tspan></text>
<text x="597" y="737">    Busy<tspan class="o">=&gt;</tspan> <tspan class="o">,</tspan></text>
<text x="597" y="756">    Active<tspan class="o">=&gt;</tspan> <tspan class="o">,</tspan></text>
<text x="597" y="775">    CommandAborted<tspan class="o">=&gt;</tspan> <tspan class="o">,</tspan></text>
<text x="597" y="794">    Error<tspan class="o">=&gt;</tspan> <tspan class="o">,</tspan></text>
<text x="597" y="813">    ErrorID<tspan class="o">=&gt;</tspan> <tspan class="o">);</tspan></text>
<text x="597" y="851"><tspan class="k">IF</tspan>  Din1 <tspan class="o">=</tspan> <tspan class="n">917504</tspan>  <tspan class="k">THEN</tspan>  <tspan class="c">// sw1</tspan></text>
<text x="597" y="870">    Dout1 <tspan class="o">:=</tspan> <tspan class="n">917503</tspan><tspan class="o">;</tspan></text>
<text x="597" y="889">    fb_MoveAbsolute.Execute  <tspan class="o">:=</tspan> <tspan class="n">TRUE</tspan><tspan class="o">;</tspan></text>
<text x="597" y="908">    fb_MoveAbsolute.Position <tspan class="o">:=</tspan> <tspan class="n">10</tspan><tspan class="o">;</tspan></text>
<text x="597" y="946"><tspan class="k">ELSIF</tspan> Din1 <tspan class="o">=</tspan> <tspan class="n">851968</tspan>  <tspan class="k">THEN</tspan>  <tspan class="c">// sw2</tspan></text>
<text x="597" y="965">    Dout1 <tspan class="o">:=</tspan> <tspan class="n">917504</tspan><tspan class="o">;</tspan></text>
<text x="597" y="984">    fb_MoveAbsolute.Execute  <tspan class="o">:=</tspan> <tspan class="n">TRUE</tspan><tspan class="o">;</tspan></text>
<text x="597" y="1003">    fb_MoveAbsolute.Position <tspan class="o">:=</tspan> <tspan class="o">-</tspan><tspan class="n">10</tspan><tspan class="o">;</tspan></text>
<text x="597" y="1041"><tspan class="k">ELSE</tspan></text>
<text x="597" y="1060">    fb_MoveAbsolute.Execute  <tspan class="o">:=</tspan> <tspan class="n">FALSE</tspan><tspan class="o">;</tspan></text>
<text x="597" y="1079">    fb_MoveAbsolute.Position <tspan class="o">:=</tspan> <tspan class="n">1</tspan><tspan class="o">;</tspan></text>
<text x="597" y="1117">    <tspan class="k">END_IF</tspan></text>
</g>

<!-- ERROR LIST -->
<rect x="520" y="1154" width="1271" height="29" fill="#4d6082"/><rect x="520" y="1154" width="1271" height="1" fill="#8c9cbc"/>
<text x="524" y="1174" fill="#fff" textLength="60" lengthAdjust="spacingAndGlyphs">エラー一覧</text>
<rect x="520" y="1183" width="1271" height="31" fill="#ccd5e6"/>
<rect x="529" y="1185" width="188" height="24" fill="#fff" stroke="#c8cfdd"/><text x="534" y="1203" textLength="104" lengthAdjust="spacingAndGlyphs">ソリューション全体</text><use href="#dd" x="703" y="1196" fill="#222"/>
<rect x="725" y="1186" width="1" height="22" fill="#9aa3b6"/>
<rect x="731.500" y="1184.500" width="81" height="26" fill="#fdfbf0" stroke="#4d6082"/>
<circle cx="744" cy="1198" r="8.500" fill="#d83030"/><path d="M740.500 1194.500l7 7M747.500 1194.500l-7 7" stroke="#fff" stroke-width="2"/>
<text x="760" y="1203">0</text><text x="772" y="1203" textLength="34" lengthAdjust="spacingAndGlyphs">エラー</text>
<rect x="817" y="1186" width="1" height="22" fill="#9aa3b6"/>
<rect x="822.500" y="1184.500" width="80" height="26" fill="#fdfbf0" stroke="#4d6082"/>
<path d="M835 1189l9 17h-18z" fill="#f8c820" stroke="#c89810" stroke-width=".6"/><rect x="834" y="1194" width="2" height="7" fill="#222"/><rect x="834" y="1202" width="2" height="2" fill="#222"/>
<text x="851" y="1203">0</text><text x="864" y="1203">警告</text>
<rect x="907" y="1186" width="1" height="22" fill="#9aa3b6"/>
<rect x="912.500" y="1184.500" width="112" height="26" fill="#fdfbf0" stroke="#4d6082"/>
<use href="#info" x="916.500" y="1189"/>
<text x="942" y="1203">19</text><text x="962" y="1203" textLength="56" lengthAdjust="spacingAndGlyphs">メッセージ</text>
<rect x="1029" y="1186" width="1" height="22" fill="#9aa3b6"/>
<text x="1038" y="1203" textLength="33" lengthAdjust="spacingAndGlyphs">クリア</text>
<rect x="1087" y="1186" width="1" height="22" fill="#9aa3b6"/>
<rect x="1097" y="1185" width="187" height="24" fill="#fff" stroke="#c8cfdd"/><text x="1102" y="1203" textLength="31" lengthAdjust="spacingAndGlyphs">ビルド</text><text x="1138" y="1203" textLength="90" lengthAdjust="spacingAndGlyphs">+ IntelliSense</text><use href="#dd" x="1271" y="1196" fill="#222"/>
<rect x="522" y="1214" width="1269" height="439" fill="#fff"/>
<rect x="522" y="1240" width="1269" height="1" fill="#d8d8d8"/>
<rect x="553" y="1214" width="1" height="26" fill="#d8d8d8"/><rect x="586" y="1214" width="1" height="26" fill="#d8d8d8"/>
<text x="592" y="1234" fill="#444" textLength="28" lengthAdjust="spacingAndGlyphs">説明</text>
<use href="#info" x="560" y="1246"/><use href="#info" x="560" y="1271"/><use href="#info" x="560" y="1296"/><use href="#info" x="560" y="1321"/><use href="#info" x="560" y="1346"/>
<g fill="#333">
<text x="586" y="1260" textLength="187" lengthAdjust="spacingAndGlyphs">generate boot information...</text>
<text x="586" y="1285" textLength="448" lengthAdjust="spacingAndGlyphs">------- Build started: Application: TwinCAT_Project32.Untitled1 -------</text>
<text x="586" y="1310" textLength="149" lengthAdjust="spacingAndGlyphs">generate relocations ...</text>
<text x="586" y="1335" textLength="394" lengthAdjust="spacingAndGlyphs">Build complete -- 0 errors, 0 warnings : ready for download!</text>
<text x="586" y="1360" textLength="196" lengthAdjust="spacingAndGlyphs">generate code initialization ...</text>
<text x="637" y="1385" textLength="673" lengthAdjust="spacingAndGlyphs">/08 20:16:15 737 ms | 'TwinCAT System' (10000): Loading configuration of COM server TcEventLogger !</text>
<text x="637" y="1410" textLength="521" lengthAdjust="spacingAndGlyphs">/08 20:16:15 780 ms | 'TwinCAT System' (10000): TcPlc30 Server started: TcPlc30.</text>
<text x="637" y="1435" textLength="562" lengthAdjust="spacingAndGlyphs">/08 20:16:17 061 ms | 'TwinCAT System' (10000): Starting COM Server TcEventLogger !</text>
<text x="637" y="1460" textLength="519" lengthAdjust="spacingAndGlyphs">/08 20:16:15 749 ms | 'TwinCAT System' (10000): TcIoEth Server started: TcIoEth.</text>
<text x="637" y="1485" textLength="855" lengthAdjust="spacingAndGlyphs">/08 20:16:11 759 ms | 'TwinCAT System' (10000): TwinCAT System Restart initiated from AmsNetId: 192.168.111.106.1.1 port 32812.</text>
<text x="637" y="1510" textLength="663" lengthAdjust="spacingAndGlyphs">/08 20:16:11 862 ms | 'TwinCAT System' (10000): Saving configuration of COM server TcEventLogger !</text>
<text x="637" y="1535" textLength="487" lengthAdjust="spacingAndGlyphs">/08 20:16:15 772 ms | 'TwinCAT System' (10000): TcNc Server started: TcNc.</text>
<text x="637" y="1560" textLength="579" lengthAdjust="spacingAndGlyphs">/08 20:16:15 738 ms | 'TwinCAT System' (10000): Initializing COM Server TcEventLogger !</text>
<text x="637" y="1585" textLength="591" lengthAdjust="spacingAndGlyphs">/08 20:16:15 755 ms | 'TwinCAT System' (10000): TcRtsObjects Server started: TcRtsObjects.</text>
<text x="637" y="1610" textLength="507" lengthAdjust="spacingAndGlyphs">/08 20:16:15 896 ms | 'License Server' (30): license validation status is Valid(3)</text>
<text x="637" y="1635" textLength="535" lengthAdjust="spacingAndGlyphs">/08 20:16:15 786 ms | 'TwinCAT System' (10000): TcRTime Server started: TcRTime.</text>
<text x="637" y="1660" textLength="607" lengthAdjust="spacingAndGlyphs">/08 20:16:11 976 ms | 'TwinCAT System' (10000): Shutting down COM Server TcEventLogger !</text>
</g>
<rect x="520" y="1653" width="1271" height="22" fill="#e8e8ec"/><rect x="630" y="1660" width="1161" height="10" fill="#c2c3c9"/>
<rect x="520" y="1675" width="1271" height="24" fill="#293955"/>
<!-- bottom right tabs -->
<rect x="560" y="1675" width="153" height="24" fill="#4d6082"/>
<text x="637" y="1692" fill="#fff" textLength="72" lengthAdjust="spacingAndGlyphs">ー コンソール</text>
<rect x="716" y="1675" width="73" height="24" fill="#fff"/><text x="722" y="1692" textLength="61" lengthAdjust="spacingAndGlyphs">エラー一覧</text>
<rect x="790" y="1675" width="44" height="24" fill="#4d6082"/><text x="798" y="1692" fill="#fff">出力</text>
<!-- status -->
<rect x="3" y="1707" width="1788" height="30" fill="#007acc"/>
<path d="M12 1716h16l-3 14H9z" fill="none" stroke="#fff" stroke-width="1.400"/>
<text x="39" y="1728" fill="#fff" textLength="242" lengthAdjust="spacingAndGlyphs">この項目はプレビューをサポートしていません</text>

<!-- DIALOG -->
<g filter="url(#sh)"><rect x="986.500" y="504.500" width="779" height="582" fill="#f0f0f0" stroke="#6a6a6a"/></g>
<rect x="987" y="505" width="778" height="37" fill="#fff"/>
<rect x="996.500" y="515.500" width="18" height="15" fill="#e4e4e4" stroke="#888"/><rect x="998" y="518" width="9" height="11" fill="#3a8f7a"/><path d="M1009 518h4M1009 522h4M1009 526h4" stroke="#bbb"/>
<text x="1021" y="529" textLength="218" lengthAdjust="spacingAndGlyphs">変数Digital inputsのアタッチ (入力)</text>
<path d="M1738 517l12 12M1750 517l-12 12" stroke="#222" stroke-width="1.200"/>
<text x="1001" y="573" textLength="31" lengthAdjust="spacingAndGlyphs">検索:</text>
<rect x="1093.500" y="556.500" width="415" height="23" fill="#fff" stroke="#888"/><path d="M1494 566l4 4 4-4" fill="none" stroke="#555"/>
<rect x="1510.500" y="555.500" width="26" height="27" fill="#e1e1e1" stroke="#adadad"/><path d="M1520 564l7 10M1527 564l-7 10" stroke="#222"/>
<rect x="1001.500" y="589.500" width="534" height="482" fill="#fff" stroke="#999"/>

<g fill="none" stroke="#888" stroke-dasharray="1 1.500">
<path d="M1017.500 605V975M1017.500 600H1030M1040 606V620H1050M1040 620M1063.500 626V640H1075M1086 646V660H1097M1108.500 666V815M1108.500 680H1122M1131.500 686V700H1145M1155.500 705V800H1167M1155.500 720H1167M1155.500 740H1167M1155.500 760H1167M1155.500 780H1167"/>
<path d="M1108.500 820H1122M1131.500 826V840H1145M1155.500 845V960H1167M1155.500 860H1167M1155.500 880H1167M1155.500 900H1167M1155.500 920H1167M1155.500 940H1167"/>
<path d="M1040 986V1000H1050M1063.500 1006V1020H1075M1086 1026V1040H1097M1108.500 1046V1060H1122"/>
</g>
<g id="dmin">
<use href="#minus" x="1012" y="595"/><use href="#minus" x="1034" y="615"/><use href="#minus" x="1058" y="635"/><use href="#minus" x="1080" y="655"/><use href="#minus" x="1103" y="675"/><use href="#minus" x="1126" y="695"/><use href="#minus" x="1103" y="815"/><use href="#minus" x="1126" y="835"/><use href="#minus" x="1012" y="975"/><use href="#minus" x="1034" y="995"/><use href="#minus" x="1058" y="1015"/><use href="#minus" x="1080" y="1035"/>
</g>
<g opacity=".6">
<use href="#motion" x="1030" y="590"/><use href="#nc" x="1053" y="610"/><use href="#axes" x="1075" y="630"/><use href="#ax" x="1098" y="650"/><use href="#enc" x="1120" y="670"/><use href="#vi" x="1144" y="690"/><use href="#drv" x="1122" y="810"/><use href="#vi" x="1144" y="830"/><use href="#plc" x="1030" y="970"/><use href="#un" x="1053" y="990"/><use href="#ins" x="1076" y="1010"/><use href="#yel" x="1098" y="1030"/>
</g>
<g>
<use href="#vi" x="1166" y="710"/><use href="#vi" x="1166" y="730"/><use href="#vi" x="1166" y="750"/><use href="#vi" x="1166" y="770"/><use href="#vi" x="1166" y="790"/>
<use href="#vi" x="1166" y="850"/><use href="#vi" x="1166" y="870"/><use href="#vi" x="1166" y="890"/><use href="#vi" x="1166" y="910"/><use href="#vi" x="1166" y="930"/><use href="#vi" x="1166" y="950"/><use href="#vi" x="1122" y="1050"/>
</g>
<g class="dt">
<text x="1054" y="605">MOTION</text><text x="1077" y="625">NC-Task 1 SAF</text><text x="1101" y="645">軸</text><text x="1123" y="665">AX1</text><text x="1146" y="685">Enc</text><text x="1169" y="705">In</text>
<text x="1193" y="725">nDataIn2</text><text x="1258" y="725">&gt;</text><text x="1276" y="725" textLength="147" lengthAdjust="spacingAndGlyphs">IB 132.0, UINTARR2 [4.0]</text>
<text x="1193" y="745">nDataIn3</text><text x="1258" y="745">&gt;</text><text x="1276" y="745" textLength="147" lengthAdjust="spacingAndGlyphs">IB 140.0, UINTARR2 [4.0]</text>
<text x="1193" y="765">nDataIn4</text><text x="1258" y="765">&gt;</text><text x="1276" y="765" textLength="147" lengthAdjust="spacingAndGlyphs">IB 144.0, UINTARR2 [4.0]</text>
<text x="1193" y="785">nDataIn5</text><text x="1258" y="785">&gt;</text><text x="1276" y="785" textLength="147" lengthAdjust="spacingAndGlyphs">IB 148.0, UINTARR2 [4.0]</text>
<text x="1193" y="805">nDataIn6</text><text x="1258" y="805">&gt;</text><text x="1276" y="805" textLength="147" lengthAdjust="spacingAndGlyphs">IB 152.0, UINTARR2 [4.0]</text>
<text x="1146" y="825">Drive</text><text x="1169" y="845">In</text>
<text x="1193" y="865">nDataIn1</text><text x="1258" y="865">&gt;</text><text x="1276" y="865" textLength="147" lengthAdjust="spacingAndGlyphs">IB 168.0, UINTARR2 [4.0]</text>
<text x="1193" y="885">nDataIn2</text><text x="1258" y="885">&gt;</text><text x="1276" y="885" textLength="147" lengthAdjust="spacingAndGlyphs">IB 172.0, UINTARR2 [4.0]</text>
<text x="1193" y="905">nDataIn3</text><text x="1258" y="905">&gt;</text><text x="1276" y="905" textLength="147" lengthAdjust="spacingAndGlyphs">IB 180.0, UINTARR2 [4.0]</text>
<text x="1193" y="925">nDataIn4</text><text x="1258" y="925">&gt;</text><text x="1276" y="925" textLength="147" lengthAdjust="spacingAndGlyphs">IB 184.0, UINTARR2 [4.0]</text>
<text x="1193" y="945">nDataIn5</text><text x="1258" y="945">&gt;</text><text x="1276" y="945" textLength="147" lengthAdjust="spacingAndGlyphs">IB 188.0, UINTARR2 [4.0]</text>
<text x="1193" y="965">nDataIn6</text><text x="1258" y="965">&gt;</text><text x="1276" y="965" textLength="147" lengthAdjust="spacingAndGlyphs">IB 192.0, UINTARR2 [4.0]</text>
<text x="1054" y="985">PLC</text><text x="1077" y="1005">Untitled1</text><text x="1101" y="1025">Untitled1 Instance</text><text x="1123" y="1045">MAIN.</text>
</g>
<rect x="1144.500" y="1051" width="204" height="18" fill="#0078d7" stroke="#111" stroke-dasharray="1 1"/>
<g class="dt"><text x="1147" y="1065" style="fill:#fff">Din1</text><text x="1188" y="1065" style="fill:#fff">&gt;</text><text x="1204" y="1065" textLength="141" lengthAdjust="spacingAndGlyphs" style="fill:#fff">IB 396772.0, UDINT [4.0]</text></g>

<!-- dialog groups -->
<g fill="none" stroke="#dcdcdc"><rect x="1549.500" y="564.500" width="197" height="190"/><rect x="1549.500" y="768.500" width="197" height="102"/><rect x="1549.500" y="885.500" width="197" height="77"/><rect x="1549.500" y="976.500" width="197" height="59"/></g>
<g fill="#f0f0f0"><rect x="1556" y="555" width="90" height="18"/><rect x="1556" y="759" width="105" height="18"/><rect x="1556" y="876" width="58" height="18"/><rect x="1556" y="967" width="96" height="18"/></g>
<text x="1559" y="569" fill="#333" textLength="82" lengthAdjust="spacingAndGlyphs">表示する変数</text>
<text x="1559" y="773" fill="#333" textLength="97" lengthAdjust="spacingAndGlyphs">表示する変数型</text>
<text x="1559" y="889" fill="#333" textLength="50" lengthAdjust="spacingAndGlyphs">オフセット</text>
<text x="1559" y="981" fill="#333" textLength="88" lengthAdjust="spacingAndGlyphs">変数名/コメント</text>
<use href="#cbc" x="1563" y="578"/><text x="1582" y="591" fill="#333" textLength="127" lengthAdjust="spacingAndGlyphs">使用していない項目の</text>
<use href="#cb" x="1563" y="598"/><text x="1582" y="611" fill="#333" textLength="115" lengthAdjust="spacingAndGlyphs">無効化変数を除外</text>
<use href="#cbc" x="1563" y="620"/><text x="1581" y="633" fill="#333" textLength="138" lengthAdjust="spacingAndGlyphs">その他のデバイスを除外</text>
<use href="#cbc" x="1563" y="642"/><text x="1582" y="655" fill="#333" textLength="115" lengthAdjust="spacingAndGlyphs">同一イメージを除外</text>
<use href="#cbs" x="1563" y="664"/><text x="1581" y="677" fill="#333" textLength="121" lengthAdjust="spacingAndGlyphs">ツールのヒントを表示</text>
<use href="#cb" x="1563" y="686"/><text x="1581" y="699" fill="#333" textLength="124" lengthAdjust="spacingAndGlyphs">アドレス順に並べ替え</text>
<use href="#cb" x="1563" y="708"/><text x="1582" y="721" fill="#333" textLength="118" lengthAdjust="spacingAndGlyphs">変数グループの表示</text>
<use href="#cbs" x="1563" y="730"/><text x="1582" y="743" fill="#333" textLength="130" lengthAdjust="spacingAndGlyphs">最後のレベルを折りたた</text>
<use href="#cb" x="1563" y="780"/><text x="1582" y="793" fill="#333" textLength="84" lengthAdjust="spacingAndGlyphs">一致する型(V)</text>
<use href="#cbc" x="1563" y="802"/><text x="1581" y="815" fill="#333" textLength="135" lengthAdjust="spacingAndGlyphs">サイズが一致する型(M)</text>
<use href="#cb" x="1563" y="824"/><text x="1582" y="837" fill="#333" textLength="70" lengthAdjust="spacingAndGlyphs">全ての型(A)</text>
<use href="#cbd" x="1563" y="846"/><text x="1582" y="859" class="dim" textLength="62" lengthAdjust="spacingAndGlyphs">配列モード</text>
<use href="#cb" x="1563" y="896"/><text x="1582" y="909" fill="#333" textLength="46" lengthAdjust="spacingAndGlyphs">連続(C)</text>
<use href="#cbd" x="1585" y="916"/><text x="1604" y="929" class="dim" textLength="83" lengthAdjust="spacingAndGlyphs">ギャップを無視</text>
<use href="#cb" x="1563" y="938"/><text x="1581" y="951" fill="#333" textLength="98" lengthAdjust="spacingAndGlyphs">ダイアログの表示</text>
<use href="#cbd" x="1563" y="988"/><text x="1582" y="1001" class="dim">/</text><use href="#cbd" x="1597" y="988"/><text x="1616" y="1001" class="dim" textLength="82" lengthAdjust="spacingAndGlyphs">ハンドオーバー</text>
<use href="#cb" x="1563" y="1010"/><text x="1582" y="1023" fill="#333">/</text><use href="#cb" x="1597" y="1010"/><text x="1616" y="1023" fill="#333" textLength="79" lengthAdjust="spacingAndGlyphs">テイクオーバー</text>
<rect x="1551.500" y="1045.500" width="88" height="25" fill="#e1e1e1" stroke="#adadad"/><text x="1566" y="1063" fill="#333" textLength="56" lengthAdjust="spacingAndGlyphs">キャンセル</text>
<rect x="1659" y="1046" width="88" height="24" fill="#e1e1e1" stroke="#0078d7" stroke-width="2"/><text x="1694" y="1063" fill="#333">OK</text>
<g fill="#c4c4c4"><rect x="1755" y="1075" width="3" height="3"/><rect x="1759" y="1075" width="3" height="3"/><rect x="1759" y="1071" width="3" height="3"/><rect x="1755" y="1079" width="3" height="3"/><rect x="1759" y="1079" width="3" height="3"/></g>

<!-- CONTEXT MENU -->
<rect x="300.500" y="1335.500" width="335" height="362" fill="#e9eefb" stroke="#a4aec2"/>
<rect x="301" y="1336" width="33" height="361" fill="#eef2fc"/>
<g fill="#b6bfcf"><rect x="340" y="1424" width="290" height="1"/><rect x="340" y="1455" width="290" height="1"/><rect x="340" y="1486" width="290" height="1"/><rect x="340" y="1517" width="290" height="1"/><rect x="340" y="1548" width="290" height="1"/><rect x="340" y="1635" width="290" height="1"/></g>
<rect x="313" y="1346" width="12" height="12" fill="#34c020" stroke="#208820" stroke-width=".6"/><rect x="310.500" y="1356.500" width="7" height="7" fill="#e8e8e8" stroke="#999"/>
<path d="M312 1371l14 15M327 1371l-14 15" stroke="#b84a3c" stroke-width="2"/><rect x="310.500" y="1382.500" width="7" height="7" fill="#e8e8e8" stroke="#999"/>
<rect x="310.500" y="1497.500" width="17" height="11" fill="#f4f6fb" stroke="#444"/><path d="M314 1500v6" stroke="#444"/>
<path d="M310 1564h9M316 1561l3 3-3 3" stroke="#222" stroke-width="1.400" fill="none"/><text x="319" y="1570" font-weight="bold" font-size="16" fill="#222">3</text>
<path d="M310 1592h9M316 1589l3 3-3 3" stroke="#f02040" stroke-width="1.400" fill="none"/><text x="319" y="1598" font-weight="bold" font-size="16" fill="#f02040">3</text>
<path d="M312 1612l14 16M327 1612l-14 16" stroke="#b4b8c0" stroke-width="3"/><text x="314" y="1625" font-weight="bold" font-size="13" fill="#b0b4bc">3</text>
<circle cx="320" cy="1648" r="6" fill="#fff" stroke="#4a90e0" stroke-width="2"/><path d="M315 1653l-5 6" stroke="#4a90e0" stroke-width="3"/>
<path d="M311 1672l15 15M326 1672l-15 15" stroke="#c8ccd4" stroke-width="2.500"/><rect x="313" y="1672" width="12" height="13" fill="none" stroke="#c8ccd4"/>
<text x="345" y="1358" textLength="83" lengthAdjust="spacingAndGlyphs">リンクの変更...</text>
<text x="345" y="1386" textLength="78" lengthAdjust="spacingAndGlyphs">リンクのクリア</text>
<text x="345" y="1414" textLength="104" lengthAdjust="spacingAndGlyphs">リンク変数に移動</text>
<text x="345" y="1446" textLength="214" lengthAdjust="spacingAndGlyphs">リンクされている変数から名前を継承</text>
<text x="345" y="1477" textLength="92" lengthAdjust="spacingAndGlyphs">Display Mode</text>
<path d="M615 1467l6 5-6 5z" fill="#222"/>
<text x="345" y="1508" textLength="94" lengthAdjust="spacingAndGlyphs">名前の変更(M)</text>
<text x="345" y="1539" class="dim" textLength="96" lengthAdjust="spacingAndGlyphs">アドレスの移動...</text>
<text x="345" y="1569" textLength="94" lengthAdjust="spacingAndGlyphs">オンラインライト...</text>
<text x="345" y="1597" textLength="93" lengthAdjust="spacingAndGlyphs">オンライン強制...</text>
<text x="345" y="1625" class="dim" textLength="72" lengthAdjust="spacingAndGlyphs">強制の解除</text>
<text x="345" y="1657" textLength="83" lengthAdjust="spacingAndGlyphs">ウォッチに追加</text>
<text x="345" y="1684" class="dim" textLength="95" lengthAdjust="spacingAndGlyphs">ウォッチから削除</text>

<!-- ARROW -->
<polygon filter="url(#sa)" points="1085,1062 1067,1087 1060,1079 428,1355 426,1352 1054,1068 1054,1061" fill="#f5145f"/>
</svg>
</body></html>
